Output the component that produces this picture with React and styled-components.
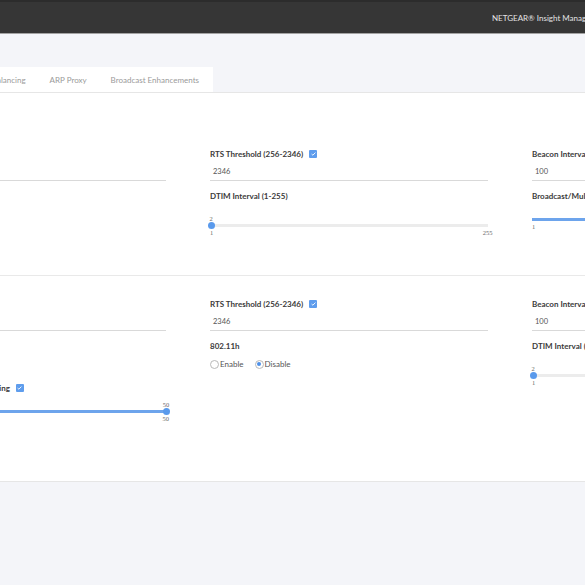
import React from "react";
import styled, { createGlobalStyle } from "styled-components";

const GlobalStyle = createGlobalStyle`
  html, body { margin: 0; padding: 0; }
  body { background: #f4f5f9; font-family: "Lato", "Liberation Sans", sans-serif; }
  * { box-sizing: border-box; }
`;

const Viewport = styled.div`
  width: 585px;
  height: 585px;
  overflow: hidden;
  background: #f4f5f9;
`;

const Canvas = styled.div`
  width: 1100px;
  margin-left: -112px;
`;

const Header = styled.header`
  height: 34px;
  background: #363636;
  border-top: 2px solid #2c2c2c;
  border-bottom: 1px solid #a3a3a3;
  display: flex;
  align-items: center;
  padding-left: 604px;
`;

const Brand = styled.span`
  color: #e4e4e4;
  font-size: 8px;
  white-space: nowrap;
`;

const SubBar = styled.div`
  height: 33px;
`;

const TabStrip = styled.nav`
  display: flex;
  height: 25px;
  width: 325px;
  justify-content: flex-end;
  background: #fff;
`;

const Tab = styled.div`
  padding: 0 12px;
  display: flex;
  align-items: center;
  font-size: 8px;
  color: #9a9a9a;
  white-space: nowrap;
  &:last-child { padding-right: 14px; }
`;

const Panel = styled.main`
  background: #fff;
  border-top: 1px solid #e6e6e6;
  border-bottom: 1px solid #e6e6e6;
`;

const Section = styled.section`
  display: grid;
  grid-template-columns: repeat(3, 278px);
  column-gap: 44px;
  align-items: start;
  padding-top: ${(p) => p.$top}px;
  padding-bottom: ${(p) => p.$bottom}px;
  border-bottom: ${(p) => (p.$divider ? "1px solid #e9e9e9" : "none")};
`;

const Column = styled.div`
  display: flex;
  flex-direction: column;
`;

const Label = styled.div`
  display: flex;
  align-items: center;
  gap: 6px;
  height: 12px;
  font-size: 8px;
  font-weight: 700;
  color: #3a3a3a;
  white-space: nowrap;
  margin-top: ${(p) => p.$mt || 0}px;
`;

const Check = styled.span`
  width: 8px;
  height: 8px;
  border-radius: 1px;
  background: #5f9ded;
  display: inline-flex;
  align-items: center;
  justify-content: center;
`;

const Input = styled.div`
  margin-top: 2px;
  height: 19px;
  line-height: 19px;
  padding-left: 3px;
  font-size: 7.5px;
  color: #555;
  border-bottom: 1px solid #d9d9d9;
`;

const SliderWrap = styled.div`
  margin-top: ${(p) => (p.$compact ? 7 : 13)}px;
  display: flex;
  flex-direction: column;
`;

const Nums = styled.div`
  position: relative;
  display: flex;
  justify-content: space-between;
  height: 8px;
  line-height: 8px;
  font-size: 6.5px;
  color: #6a6a6a;
  font-family: "Liberation Serif", serif;
`;

const MaxNum = styled.span`
  transform: translateX(45%);
`;

const TopNum = styled.span`
  position: absolute;
  top: 0;
  transform: translateX(-50%);
`;

const Track = styled.div`
  position: relative;
  height: 3px;
  margin: 1px 0 2px;
  background: #ececec;
`;

const Fill = styled.div`
  height: 3px;
  background: #6da4ec;
`;

const Thumb = styled.span`
  position: absolute;
  top: -2px;
  width: 7px;
  height: 7px;
  margin-left: -3px;
  border-radius: 50%;
  background: #5a9aec;
`;

const RadioRow = styled.div`
  margin-top: 6px;
  display: flex;
  gap: 11px;
  height: 12px;
  align-items: center;
`;

const RadioItem = styled.label`
  display: flex;
  align-items: center;
  gap: 1px;
  font-size: 8px;
  color: #555;
`;

const RadioCircle = styled.span`
  width: 9px;
  height: 9px;
  border-radius: 50%;
  border: 1px solid #b9b9b9;
  display: inline-flex;
  align-items: center;
  justify-content: center;
  &::after {
    content: "";
    width: 4px;
    height: 4px;
    border-radius: 50%;
    background: ${(p) => (p.$on ? "#4e90e8" : "transparent")};
  }
`;

const CheckIcon = () => (
  <Check>
    <svg width="5" height="4" viewBox="0 0 5 4">
      <path d="M0.6 2.1 L1.9 3.2 L4.4 0.6" stroke="#fff" strokeWidth="0.9" fill="none" />
    </svg>
  </Check>
);

const Field = ({ label, value, check, mt }) => (
  <>
    <Label $mt={mt}>
      {label}
      {check && <CheckIcon />}
    </Label>
    <Input>{value}</Input>
  </>
);

const Slider = ({ min, max, value, compact, showTop = true }) => {
  const pct = ((value - min) / (max - min)) * 100;
  return (
    <SliderWrap $compact={compact}>
      <Nums>{showTop && <TopNum style={{ left: `${pct}%` }}>{value}</TopNum>}</Nums>
      <Track>
        <Fill style={{ width: `${pct}%` }} />
        <Thumb style={{ left: `${pct}%` }} />
      </Track>
      <Nums>
        <span>{min}</span>
        <MaxNum>{max}</MaxNum>
      </Nums>
    </SliderWrap>
  );
};

const Radios = ({ on }) => (
  <RadioRow>
    <RadioItem>
      <RadioCircle $on={on === "Enable"} />
      Enable
    </RadioItem>
    <RadioItem>
      <RadioCircle $on={on === "Disable"} />
      Disable
    </RadioItem>
  </RadioRow>
);

export default function App() {
  return (
    <>
      <GlobalStyle />
      <Viewport>
        <Canvas>
          <Header>
            <Brand>NETGEAR® Insight Managed Access Point</Brand>
          </Header>
          <SubBar />
          <TabStrip>
            <Tab>Load Balancing</Tab>
            <Tab>ARP Proxy</Tab>
            <Tab>Broadcast Enhancements</Tab>
          </TabStrip>
          <Panel>
            <Section $top={55} $bottom={38} $divider>
              <Column>
                <Field label="Channel" value="Auto" />
              </Column>
              <Column>
                <Field label="RTS Threshold (256-2346)" value="2346" check />
                <Label $mt={9}>DTIM Interval (1-255)</Label>
                <Slider min={1} max={255} value={2} />
              </Column>
              <Column>
                <Field label="Beacon Interval (100-300)" value="100" />
                <Label $mt={9}>Broadcast/Multicast Rate Limiting</Label>
                <Slider min={1} max={50} value={50} compact showTop={false} />
              </Column>
            </Section>
            <Section $top={22} $bottom={58}>
              <Column>
                <Field label="Channel" value="Auto" />
                <Label $mt={9}>802.11d</Label>
                <Radios on="Enable" />
                <Label $mt={12}>
                  Broadcast/Multicast Rate Limiting
                  <CheckIcon />
                </Label>
                <Slider min={1} max={50} value={50} compact />
              </Column>
              <Column>
                <Field label="RTS Threshold (256-2346)" value="2346" check />
                <Label $mt={9}>802.11h</Label>
                <Radios on="Disable" />
              </Column>
              <Column>
                <Field label="Beacon Interval (100-300)" value="100" />
                <Label $mt={9}>DTIM Interval (1-255)</Label>
                <Slider min={1} max={255} value={2} />
              </Column>
            </Section>
          </Panel>
        </Canvas>
      </Viewport>
    </>
  );
}
